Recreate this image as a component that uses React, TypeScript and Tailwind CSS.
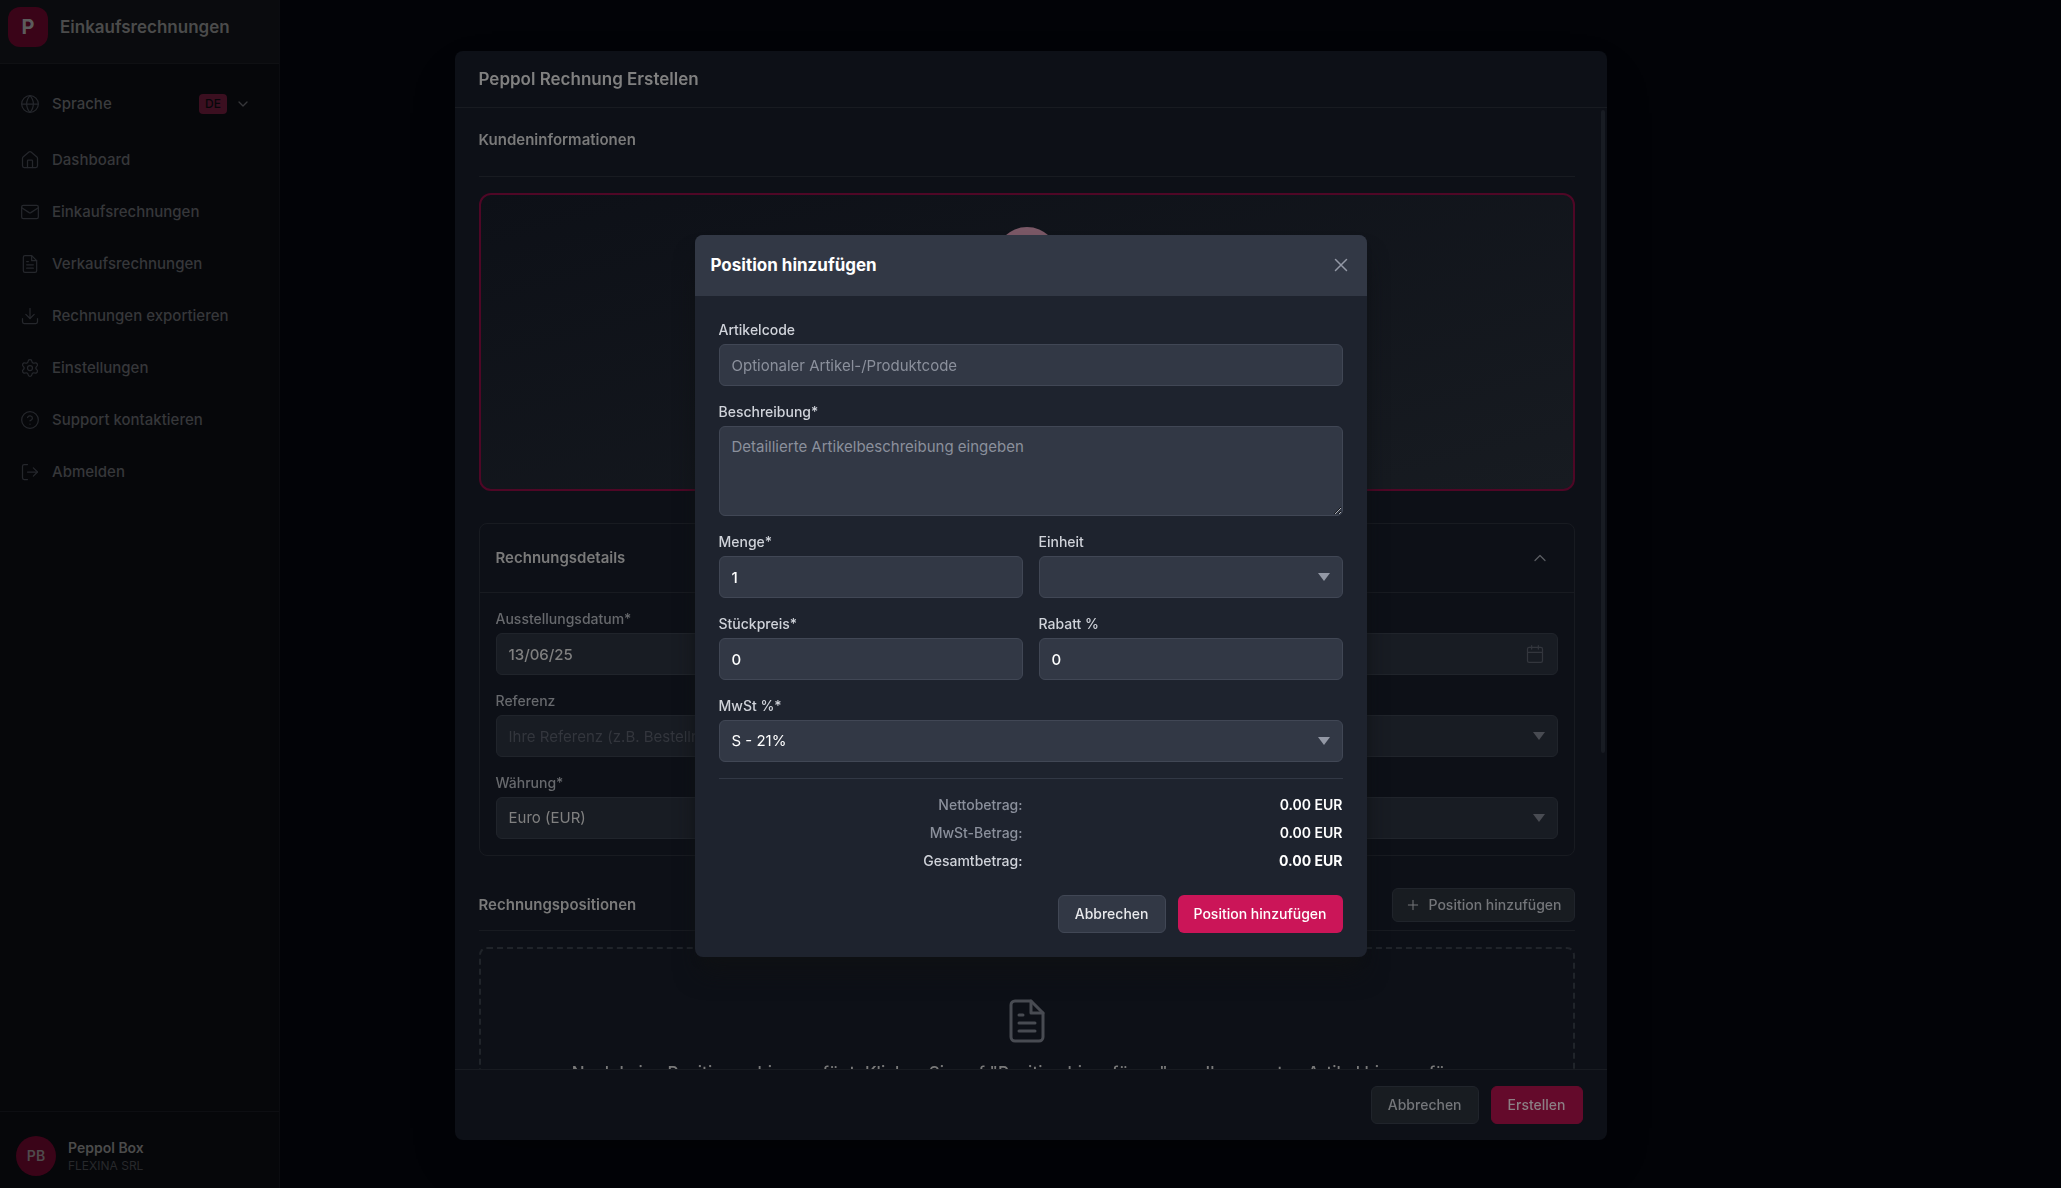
import { useState, type ReactNode } from 'react';
import {
  Calendar,
  ChevronDown,
  ChevronUp,
  CircleHelp,
  Download,
  Globe,
  House,
  LogOut,
  Mail,
  Plus,
  Settings,
} from 'lucide-react';

function FileIcon({ className = '' }: { className?: string }) {
  return (
    <svg
      viewBox="0 0 24 24"
      fill="none"
      stroke="currentColor"
      strokeWidth="1.5"
      strokeLinecap="round"
      strokeLinejoin="round"
      className={className}
      aria-hidden="true"
    >
      <path d="M14 2H6a2 2 0 0 0-2 2v16a2 2 0 0 0 2 2h12a2 2 0 0 0 2-2V8z" />
      <path d="M14 2v6h6M16 13H8M16 17H8M10 9H8" />
    </svg>
  );
}

const navIcon = 'size-5 shrink-0 text-[#25272c]';

const navItems = [
  { label: 'Dashboard', icon: <House className={navIcon} strokeWidth={1.5} /> },
  { label: 'Einkaufsrechnungen', icon: <Mail className={navIcon} strokeWidth={1.5} /> },
  { label: 'Verkaufsrechnungen', icon: <FileIcon className={navIcon} /> },
  { label: 'Rechnungen exportieren', icon: <Download className={navIcon} strokeWidth={1.5} /> },
  { label: 'Einstellungen', icon: <Settings className={navIcon} strokeWidth={1.5} /> },
  { label: 'Support kontaktieren', icon: <CircleHelp className={navIcon} strokeWidth={1.5} /> },
  { label: 'Abmelden', icon: <LogOut className={navIcon} strokeWidth={1.5} /> },
];

function Sidebar() {
  return (
    <aside className="flex w-[280px] shrink-0 flex-col border-r border-[#0b0c10] bg-[#06070a]">
      <div className="flex h-16 items-start gap-3 border-b border-[#0f1013] bg-[#0a0b0e] px-2 pt-[7px]">
        <div className="flex size-10 items-center justify-center rounded-xl bg-[#3a0418] text-xl font-bold text-[#5c5c5c]">
          P
        </div>
        <span className="text-[17px] leading-10 font-semibold text-[#4b4b4b]">Einkaufsrechnungen</span>
      </div>

      <nav className="flex flex-1 flex-col gap-1 pt-4 text-[15px]">
        <button className="mb-1 flex h-12 items-center gap-3 pr-7 pl-5 text-left font-medium text-[#3b3c3e]">
          <Globe className={navIcon} strokeWidth={1.5} />
          <span className="flex-1">Sprache</span>
          <span className="rounded bg-[#3b0f20] px-1.5 text-xs leading-5 font-medium text-[#06070a]">DE</span>
          <ChevronDown className="-ml-1 size-4 text-[#36373a]" />
        </button>
        {navItems.map((item) => (
          <a key={item.label} href="#" className="flex h-12 items-center gap-3 px-5 font-medium text-[#36373a]">
            {item.icon}
            {item.label}
          </a>
        ))}
      </nav>

      <div className="flex items-center gap-3 border-t border-[#0d0e12] px-4 pt-6 pb-3">
        <div className="flex size-10 items-center justify-center rounded-full bg-[#3a0418] text-sm font-semibold text-[#4f4a4c]">
          PB
        </div>
        <div>
          <div className="text-sm leading-5 font-semibold text-[#4b4b4b]">Peppol Box</div>
          <div className="text-xs leading-4 text-[#28292c]">FLEXINA SRL</div>
        </div>
      </div>
    </aside>
  );
}

interface FieldProps {
  id: string;
  label: string;
  dim?: boolean;
  children: ReactNode;
}

function Field({ id, label, dim, children }: FieldProps) {
  return (
    <div>
      <label
        htmlFor={id}
        className={`mb-1 block text-sm leading-5 font-medium ${dim ? 'text-[#67696d]' : 'text-[#d0d3da]'}`}
      >
        {label}
      </label>
      {children}
    </div>
  );
}

const control = 'block w-full rounded-md border px-3 text-[15px] leading-6 outline-none';
const lightControl = `${control} border-[#414755] bg-[#323845] text-white placeholder:text-[#8b909c] placeholder:opacity-100`;
const dimControl = `${control} border-[#20242b] bg-[#181c23] text-[#808080] placeholder:text-[#33363d] placeholder:opacity-100`;

interface SelectProps {
  id: string;
  options: string[];
  dim?: boolean;
}

function Select({ id, options, dim }: SelectProps) {
  return (
    <div className="relative">
      <select id={id} className={`h-[42px] appearance-none ${dim ? dimControl : lightControl}`}>
        {options.map((o) => (
          <option key={o}>{o}</option>
        ))}
      </select>
      <svg
        viewBox="0 0 12 8"
        className={`pointer-events-none absolute top-1/2 right-[13px] h-2 w-3 -translate-y-1/2 ${dim ? 'text-[#484b52]' : 'text-[#9398a5]'}`}
        fill="currentColor"
        aria-hidden="true"
      >
        <path d="M0 0h12L6 8z" />
      </svg>
    </div>
  );
}

function InvoiceModal() {
  const [issueDate, setIssueDate] = useState('13/06/25');
  const [dueDate, setDueDate] = useState('');

  return (
    <div className="fixed inset-0 flex justify-center px-4 pt-[51px] pb-12">
      <div className="flex w-full max-w-6xl flex-col overflow-hidden rounded-lg bg-[#0d1017] shadow-2xl">
        <div className="border-b border-[#181b21] px-6 py-3.5">
          <h2 className="text-[17px] leading-7 font-semibold text-[#808080]">Peppol Rechnung Erstellen</h2>
        </div>

        <div className="flex min-h-0 flex-1">
          <div className="flex-1 overflow-hidden pt-5 pr-6 pl-6">
            <h3 className="mb-4 border-b border-[#181b21] pb-6 text-[15px] leading-6 font-semibold text-[#7a7a7a]">
              Kundeninformationen
            </h3>
            <div className="flex h-[298px] justify-center rounded-xl border-2 border-[#4f0726] bg-linear-to-br from-[#0d1017] to-[#171b21] pt-8">
              <div className="size-16 rounded-full bg-[#7a5866]" />
            </div>

            <section className="mt-8 rounded-lg border border-[#181b21]">
              <div className="flex h-[69px] items-center justify-between border-b border-[#181b21] px-4">
                <h3 className="text-[15px] font-semibold text-[#7a7a7a]">Rechnungsdetails</h3>
                <button aria-label="Rechnungsdetails einklappen" className="flex size-9 items-center justify-center text-[#5b5d62]">
                  <ChevronUp className="size-5" strokeWidth={1.5} />
                </button>
              </div>
              <div className="grid grid-cols-2 gap-4 p-4">
                <Field id="issue-date" label="Ausstellungsdatum*" dim>
                  <input
                    id="issue-date"
                    value={issueDate}
                    onChange={(e) => setIssueDate(e.target.value)}
                    className={`h-[42px] font-medium ${dimControl}`}
                  />
                </Field>
                <Field id="due-date" label="Fällig am" dim>
                  <div className="relative">
                    <input
                      id="due-date"
                      value={dueDate}
                      onChange={(e) => setDueDate(e.target.value)}
                      className={`h-[42px] ${dimControl}`}
                    />
                    <Calendar
                      className="pointer-events-none absolute top-1/2 right-[13px] size-5 -translate-y-1/2 text-[#33363d]"
                      strokeWidth={1.5}
                    />
                  </div>
                </Field>
                <Field id="reference" label="Referenz" dim>
                  <input
                    id="reference"
                    placeholder="Ihre Referenz (z.B. Bestellnummer)"
                    className={`h-[42px] ${dimControl}`}
                  />
                </Field>
                <Field id="payment" label="Zahlungsart" dim>
                  <Select id="payment" options={['']} dim />
                </Field>
                <Field id="currency" label="Währung*" dim>
                  <Select id="currency" options={['Euro (EUR)']} dim />
                </Field>
                <Field id="terms" label="Zahlungsziel" dim>
                  <Select id="terms" options={['']} dim />
                </Field>
              </div>
            </section>

            <div className="mt-8 flex items-center justify-between border-b border-[#181b21] pb-2">
              <h3 className="text-[15px] font-semibold text-[#7a7a7a]">Rechnungspositionen</h3>
              <button className="flex h-[34px] items-center gap-2 rounded-md border border-[#20242b] bg-[#181c21] px-3 text-sm font-medium text-[#74767a]">
                <Plus className="size-4" strokeWidth={1.5} />
                Position hinzufügen
              </button>
            </div>

            <div className="mt-4 flex flex-col items-center rounded-lg border-2 border-dashed border-[#20242a] py-12">
              <FileIcon className="size-12 text-[#484b52]" />
              <p className="mt-4 text-[17px] leading-6 font-medium whitespace-nowrap text-[#7a7a7a]">
                Noch keine Positionen hinzugefügt. Klicken Sie auf &quot;Position hinzufügen&quot;, um Ihren ersten
                Artikel hinzuzufügen.
              </p>
            </div>
          </div>

          {/* Scrollbar */}
          <div className="w-2 shrink-0 pt-0.5 pl-0.5">
            <div className="h-[67%] w-1 rounded-full bg-[#181c23]" />
          </div>
        </div>

        <div className="flex justify-end gap-3 border-t border-[#181b21] px-6 py-4">
          <button className="h-[38px] rounded-md border border-[#20242b] bg-[#181c21] px-4 text-sm font-medium text-[#74767a]">
            Abbrechen
          </button>
          <button className="h-[38px] rounded-md border border-[#640a2b] bg-[#640a2b] px-4 text-sm font-medium text-[#8c7f84]">
            Erstellen
          </button>
        </div>
      </div>
    </div>
  );
}

function ItemDialog() {
  const [quantity, setQuantity] = useState('1');
  const [price, setPrice] = useState('0');
  const [discount, setDiscount] = useState('0');

  return (
    <div className="fixed inset-0 flex items-center justify-center px-4 pt-1">
      <div
        role="dialog"
        aria-labelledby="item-title"
        className="w-full max-w-2xl overflow-hidden rounded-lg bg-[#1e232e] shadow-[0_20px_25px_-5px_#0f1114,0_8px_10px_-6px_#0f1114]"
      >
        <div className="flex items-center justify-between border-b border-[#323845] bg-[#323845] p-4">
          <h2 id="item-title" className="text-[17px] leading-7 font-bold text-white">
            Position hinzufügen
          </h2>
          <button aria-label="Schließen" className="text-[#9398a5]">
            <svg viewBox="0 0 20 20" className="size-5" fill="none" stroke="currentColor" strokeWidth="1.5" strokeLinecap="round">
              <path d="M4.5 4.5l11 11M15.5 4.5l-11 11" />
            </svg>
          </button>
        </div>

        <form className="flex flex-col gap-4 p-6" onSubmit={(e) => e.preventDefault()}>
          <Field id="code" label="Artikelcode">
            <input id="code" placeholder="Optionaler Artikel-/Produktcode" className={`h-[42px] ${lightControl}`} />
          </Field>
          <Field id="description" label="Beschreibung*">
            <textarea
              id="description"
              placeholder="Detaillierte Artikelbeschreibung eingeben"
              className={`h-[90px] resize-y py-2 ${lightControl}`}
            />
          </Field>
          <div className="grid grid-cols-2 gap-4">
            <Field id="quantity" label="Menge*">
              <input
                id="quantity"
                value={quantity}
                onChange={(e) => setQuantity(e.target.value)}
                className={`h-[42px] font-medium ${lightControl}`}
              />
            </Field>
            <Field id="unit" label="Einheit">
              <Select id="unit" options={['']} />
            </Field>
            <Field id="price" label="Stückpreis*">
              <input
                id="price"
                value={price}
                onChange={(e) => setPrice(e.target.value)}
                className={`h-[42px] font-medium ${lightControl}`}
              />
            </Field>
            <Field id="discount" label="Rabatt %">
              <input
                id="discount"
                value={discount}
                onChange={(e) => setDiscount(e.target.value)}
                className={`h-[42px] font-medium ${lightControl}`}
              />
            </Field>
          </div>
          <Field id="vat" label="MwSt %*">
            <Select id="vat" options={['S - 21%']} />
          </Field>

          <div className="grid grid-cols-2 gap-x-4 gap-y-2 border-t border-[#323845] pt-4 text-right text-sm leading-5">
            <span className="font-medium text-[#8b909c]">Nettobetrag:</span>
            <span className="font-semibold text-white">0.00 EUR</span>
            <span className="font-medium text-[#8b909c]">MwSt-Betrag:</span>
            <span className="font-semibold text-white">0.00 EUR</span>
            <span className="font-medium text-[#d0d3da]">Gesamtbetrag:</span>
            <span className="font-bold text-white">0.00 EUR</span>
          </div>

          <div className="mt-2 flex justify-end gap-3">
            <button
              type="button"
              className="h-[38px] rounded-md border border-[#414755] bg-[#323845] px-4 text-sm font-medium text-[#e8e9ec]"
            >
              Abbrechen
            </button>
            <button type="submit" className="h-[38px] rounded-md bg-[#cb1558] px-4 text-sm font-medium text-white">
              Position hinzufügen
            </button>
          </div>
        </form>
      </div>
    </div>
  );
}

export default function App() {
  return (
    <div className="flex min-h-screen bg-[#020307] font-['Inter',sans-serif]">
      <Sidebar />
      <InvoiceModal />
      <ItemDialog />
    </div>
  );
}
